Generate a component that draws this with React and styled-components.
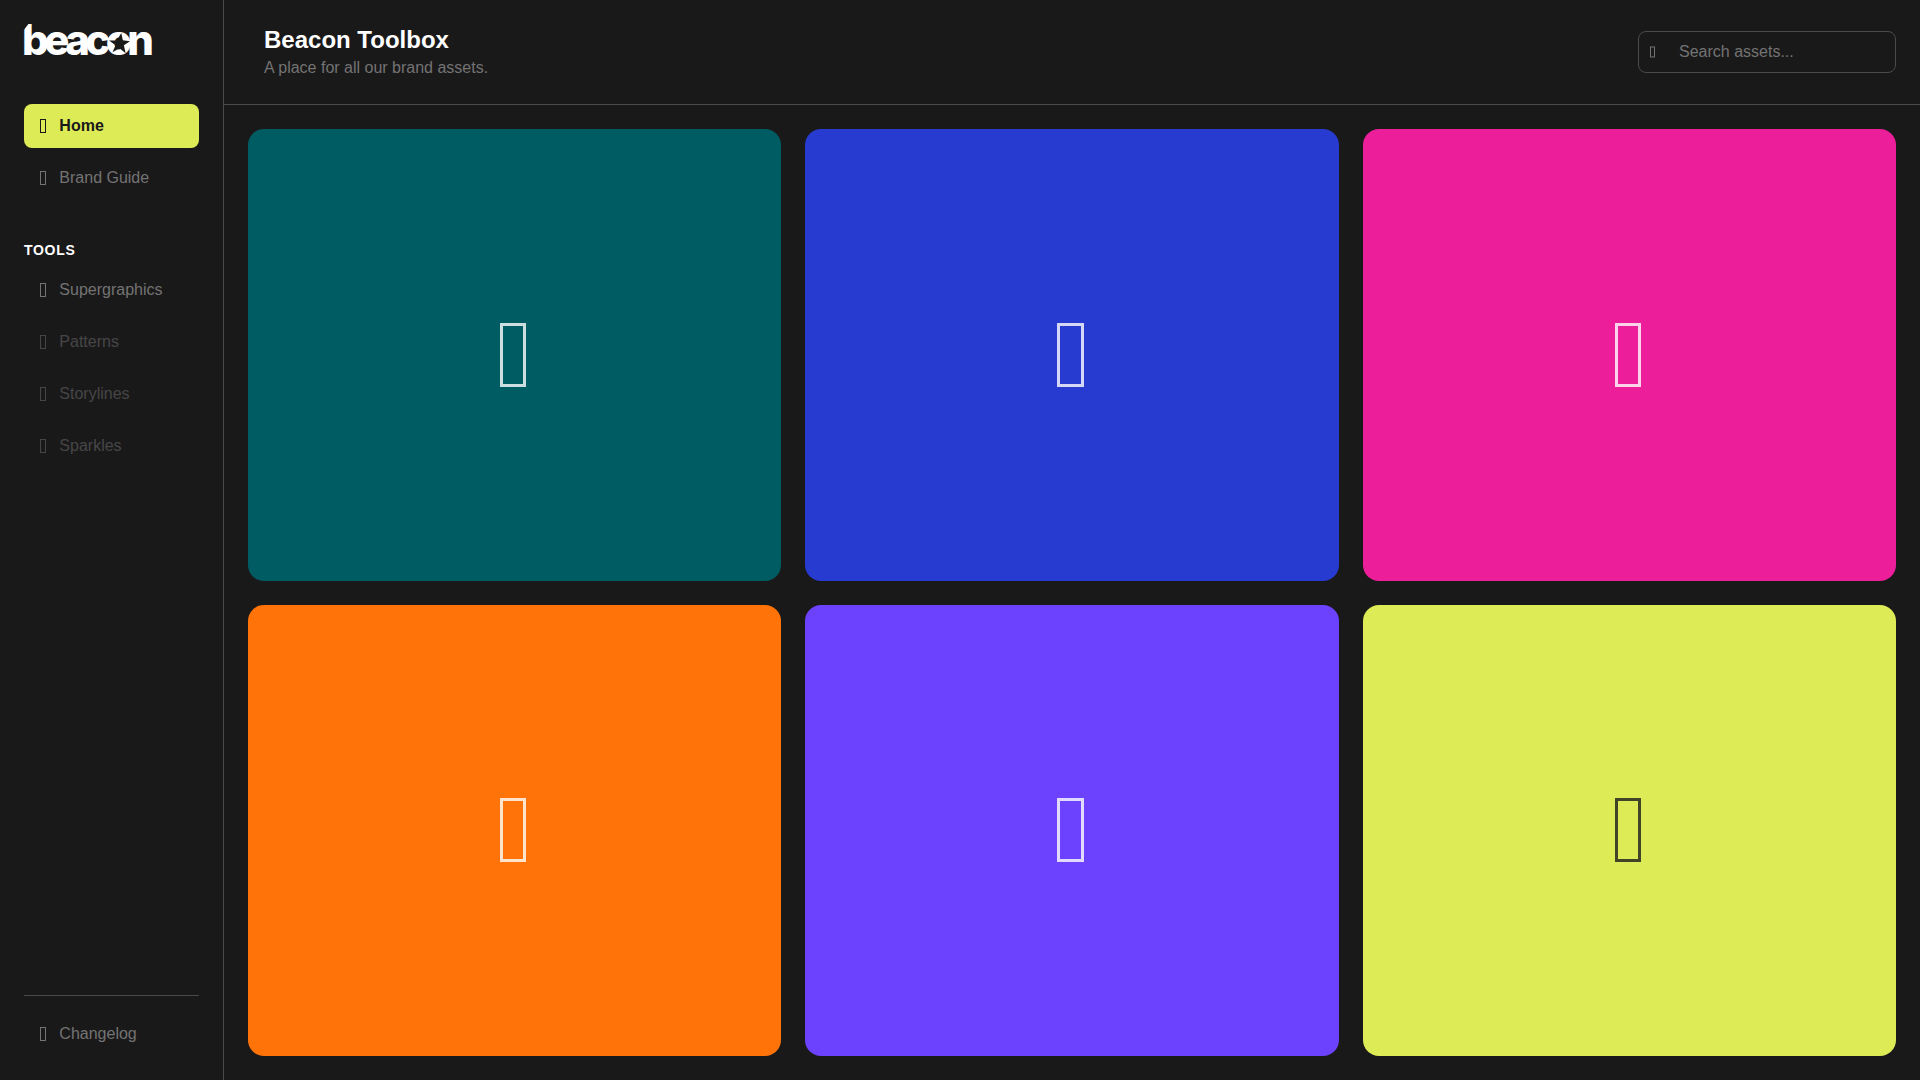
import React from 'react'
import styled, { createGlobalStyle } from 'styled-components'

const mainNav = [
  { label: 'Home', active: true },
  { label: 'Brand Guide' },
]

const toolsNav = [
  { label: 'Supergraphics' },
  { label: 'Patterns', muted: true },
  { label: 'Storylines', muted: true },
  { label: 'Sparkles', muted: true },
]

const cards = [
  { color: '#005c63', tint: 'rgba(255, 255, 255, 0.8)' },
  { color: '#283bd0', tint: 'rgba(255, 255, 255, 0.8)' },
  { color: '#ed1e99', tint: 'rgba(255, 255, 255, 0.8)' },
  { color: '#ff7308', tint: 'rgba(255, 255, 255, 0.8)' },
  { color: '#6d42ff', tint: 'rgba(255, 255, 255, 0.8)' },
  { color: '#ddeb56', tint: 'rgba(26, 26, 26, 0.8)' },
]

const NavItem = ({ item }) => (
  <NavLink $active={item.active} $muted={item.muted}>
    <NavIcon />
    {item.label}
  </NavLink>
)

const App = () => {
  return (
    <Shell>
      <GlobalStyle />
      <Sidebar>
        <Logo>
          beacon
          <LogoStar viewBox="0 0 24 24">
            <path d="M14 0l1.800 8.200L24 9.500l-7 4.500 2 9-7-5.500L4 22l3.500-8L0 8.500l9 .2z" />
          </LogoStar>
        </Logo>
        <NavGroup>
          {mainNav.map(item => <NavItem key={item.label} item={item} />)}
        </NavGroup>
        <SectionTitle>TOOLS</SectionTitle>
        <NavGroup>
          {toolsNav.map(item => <NavItem key={item.label} item={item} />)}
        </NavGroup>
        <SidebarFooter>
          <NavItem item={{ label: 'Changelog' }} />
        </SidebarFooter>
      </Sidebar>
      <Main>
        <Header>
          <div>
            <Title>Beacon Toolbox</Title>
            <Subtitle>A place for all our brand assets.</Subtitle>
          </div>
          <SearchBox>
            <SearchIcon />
            <SearchInput placeholder="Search assets..." />
          </SearchBox>
        </Header>
        <CardGrid>
          {cards.map(card => (
            <Card key={card.color} $color={card.color} $tint={card.tint}>
              <CardIcon />
            </Card>
          ))}
        </CardGrid>
      </Main>
    </Shell>
  )
}

export default App

const GlobalStyle = createGlobalStyle`
  * {
    box-sizing: border-box;
  }

  body {
    margin: 0;
    background: #1a191a;
    font-family: "Liberation Sans", Arial, sans-serif;
  }
`

const Shell = styled.div`
  display: flex;
  width: 100%;
  height: 100vh;
  overflow: hidden;
  background: #1a191a;
`

const Sidebar = styled.aside`
  display: flex;
  flex-direction: column;
  flex: 0 0 224px;
  padding: 24px;
  border-right: 1px solid #4a4a4a;
`

const Logo = styled.div`
  position: relative;
  align-self: flex-start;
  height: 32px;
  margin-bottom: 48px;
  margin-left: -2px;
  color: #ffffff;
  font-family: Inter, "Liberation Sans", sans-serif;
  font-size: 42px;
  font-weight: 800;
  line-height: 32px;
  letter-spacing: -4.6px;

  &::before {
    content: '';
    position: absolute;
    top: -2px;
    left: 1px;
    width: 7px;
    height: 9px;
    background: #1a191a;
    clip-path: polygon(0 0, 100% 0, 0 100%);
  }
`

const LogoStar = styled.svg`
  position: absolute;
  top: 9px;
  left: 87px;
  width: 21px;
  height: 21px;
  fill: #1a191a;
`

const NavGroup = styled.nav`
  display: flex;
  flex-direction: column;
  gap: 8px;
`

const NavLink = styled.a`
  display: flex;
  align-items: center;
  height: 44px;
  padding: 0 16px;
  border-radius: 8px;
  background: ${({ $active }) => ($active ? '#ddeb56' : 'transparent')};
  color: ${({ $active, $muted }) => ($active ? '#1a191a' : $muted ? '#464646' : '#737373')};
  font-size: 16px;
  font-weight: ${({ $active }) => ($active ? 700 : 400)};
  cursor: pointer;
`

// the icons show up as empty "missing glyph" boxes, sized in em like a glyph
const MissingGlyph = styled.span`
  display: block;
  flex: none;
  width: 0.365em;
  height: 0.885em;
  border: 0.045em solid currentColor;
`

const NavIcon = styled(MissingGlyph)`
  margin-right: 13.5px;
`

const SectionTitle = styled.h2`
  margin: 42px 0 10px;
  color: #ffffff;
  font-size: 14px;
  font-weight: 700;
  line-height: 16px;
  letter-spacing: 0.05em;
`

const SidebarFooter = styled.div`
  margin-top: auto;
  padding-top: 16px;
  border-top: 1px solid #4a4a4a;
`

const Main = styled.main`
  display: flex;
  flex-direction: column;
  flex: 1;
  min-width: 0;
`

const Header = styled.header`
  display: flex;
  align-items: center;
  justify-content: space-between;
  flex: 0 0 105px;
  padding: 0 24px 0 40px;
  border-bottom: 1px solid #4a4a4a;
`

const Title = styled.h1`
  margin: 0;
  color: #ffffff;
  font-size: 24px;
  font-weight: 700;
  line-height: 32px;
`

const Subtitle = styled.p`
  margin: 0;
  color: #737373;
  font-size: 16px;
  line-height: 24px;
`

const SearchBox = styled.div`
  position: relative;
  width: 258px;
`

const SearchIcon = styled(MissingGlyph)`
  position: absolute;
  top: 50%;
  left: 12px;
  transform: translateY(-50%);
  color: #737373;
  font-size: 12.5px;
`

const SearchInput = styled.input`
  display: block;
  width: 100%;
  height: 42px;
  padding: 0 16px 0 40px;
  border: 1px solid #4a4a4a;
  border-radius: 8px;
  outline: none;
  background: transparent;
  color: #ffffff;
  font-family: inherit;
  font-size: 16px;

  &::placeholder {
    color: #737373;
    opacity: 1;
  }
`

const CardGrid = styled.section`
  display: grid;
  flex: 1;
  grid-template-columns: repeat(3, 1fr);
  grid-template-rows: repeat(2, 1fr);
  gap: 24px;
  min-height: 0;
  padding: 24px;
`

const Card = styled.div`
  display: flex;
  align-items: center;
  justify-content: center;
  border-radius: 16px;
  background: ${({ $color }) => $color};
  color: ${({ $tint }) => $tint};
  font-size: 72px;
`

const CardIcon = styled(MissingGlyph)`
  margin-right: 3px;
`
